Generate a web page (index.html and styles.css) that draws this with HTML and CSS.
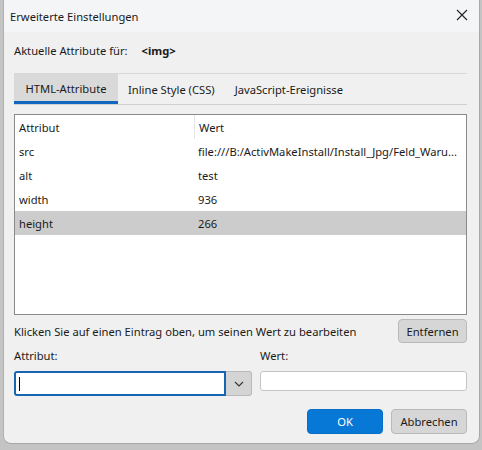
FILE: index.html
```html
<!DOCTYPE html>
<html>
<head>
<meta charset="utf-8">
<link rel="stylesheet" href="styles.css">
</head>
<body>
<div class="dialog">
  <div class="titlebar">
    <span class="title">Erweiterte Einstellungen</span>
    <svg class="close" width="12" height="12" viewBox="0 0 12 12"><path d="M1 1 L11 11 M11 1 L1 11" stroke="#222" stroke-width="1.1" fill="none"/></svg>
  </div>
  <div class="content">
    <div class="current"><span>Aktuelle Attribute für:</span><b class="tag">&lt;img&gt;</b></div>
    <div class="tabs">
      <div class="tab active">HTML-Attribute</div>
      <div class="tab">Inline Style (CSS)</div>
      <div class="tab">JavaScript-Ereignisse</div>
    </div>
    <div class="list">
      <div class="row head"><div class="c1">Attribut</div><div class="c2 sep">Wert</div></div>
      <div class="row"><div class="c1">src</div><div class="c2">file:///B:/ActivMakeInstall/Install_Jpg/Feld_Waru...</div></div>
      <div class="row"><div class="c1">alt</div><div class="c2">test</div></div>
      <div class="row"><div class="c1">width</div><div class="c2">936</div></div>
      <div class="row sel"><div class="c1">height</div><div class="c2">266</div></div>
    </div>
    <div class="hintrow">
      <span>Klicken Sie auf einen Eintrag oben, um seinen Wert zu bearbeiten</span>
      <div class="btn">Entfernen</div>
    </div>
    <div class="fields">
      <div class="field left">
        <div class="label">Attribut:</div>
        <div class="combo">
          <div class="cinput"><span class="caret"></span></div>
          <div class="cbtn"><svg width="10" height="6" viewBox="0 0 10 6"><path d="M1 1 L5 5 L9 1" stroke="#333" stroke-width="1.1" fill="none"/></svg></div>
        </div>
      </div>
      <div class="field right">
        <div class="label">Wert:</div>
        <div class="tinput"></div>
      </div>
    </div>
    <div class="actions">
      <div class="btn primary">OK</div>
      <div class="btn">Abbrechen</div>
    </div>
  </div>
</div>
</body>
</html>
```
FILE: styles.css
```css
html, body {
  margin: 0;
  padding: 0;
}
body {
  width: 482px;
  height: 450px;
  background: #c4c4c4;
  font-family: "Noto Sans", "Liberation Sans", sans-serif;
  font-size: 11.2px;
  color: #1a1a1a;
  overflow: hidden;
}
.dialog {
  margin-left: 3px;
  width: 477px;
  height: 444px;
  background: #f0f0f0;
  border-right: 1px solid #a8a8a8;
  border-bottom: 1px solid #a8a8a8;
  border-left: 1px solid #b0b0b0;
  border-radius: 0 0 8px 8px;
  box-sizing: border-box;
}
.titlebar {
  height: 32px;
  background: #f4f5f7;
  display: flex;
  align-items: center;
  justify-content: space-between;
  padding: 0 11px 0 6px;
}
.close { margin-top: -2px; }
.content {
  padding: 0 12px 0 10px;
}
.current {
  height: 18px;
  margin-top: 9px;
  display: flex;
  align-items: center;
}
.current .tag {
  margin-left: 14px;
  font-weight: bold;
}
.tabs {
  margin-top: 14px;
  display: flex;
  border-top: 1px solid #d7d7d7;
  border-bottom: 1px solid #cfcfcf;
  height: 30px;
  box-sizing: content-box;
}
.tab {
  padding: 0 10px;
  display: flex;
  align-items: center;
  height: 30px;
  box-sizing: border-box;
  white-space: nowrap;
}
.tab.active {
  background: #d9d9d9;
  border-bottom: 3px solid #0f67c0;
  padding: 2px 0 0 0;
  width: 104px;
  justify-content: center;
}
.list {
  margin-top: 9px;
  height: 201px;
  background: #fff;
  border: 1px solid #8a8a8a;
  box-sizing: border-box;
}
.row {
  display: flex;
  height: 24px;
  align-items: center;
}
.c1 {
  width: 179px;
  box-sizing: border-box;
  padding-left: 4px;
}
.c2 {
  flex: 1;
  min-width: 0;
  padding-left: 4px;
  white-space: nowrap;
  overflow: hidden;
  text-overflow: ellipsis;
}
.c2.sep {
  border-left: 1px solid #e5e5e5;
  height: 24px;
  display: flex;
  align-items: center;
}
.row.sel { background: #cccccc; }
.hintrow {
  margin-top: 4px;
  display: flex;
  justify-content: space-between;
  align-items: center;
  height: 24px;
}
.btn {
  width: 69px;
  height: 24px;
  box-sizing: border-box;
  background: #d6d6d6;
  border: 1px solid #b9b9b9;
  border-radius: 4px;
  display: flex;
  align-items: center;
  justify-content: center;
}
.btn.primary {
  background: #0878d7;
  border-color: #0a6fc7;
  color: #fff;
}
.fields {
  margin-top: 5px;
  display: flex;
  justify-content: space-between;
}
.field.left { width: 238px; }
.field.right { width: 207px; }
.label {
  height: 16px;
  line-height: 16px;
  margin-bottom: 7px;
}
.combo {
  display: flex;
  height: 25px;
}
.cinput {
  flex: 1;
  background: #fff;
  border: 2px solid #1565b0;
  border-radius: 3px 0 0 3px;
  box-sizing: border-box;
  position: relative;
}
.caret {
  position: absolute;
  left: 3px;
  top: 4px;
  width: 1px;
  height: 14px;
  background: #000;
}
.cbtn {
  width: 26px;
  background: #d4d4d4;
  border: 1px solid #b9b9b9;
  border-left: none;
  border-radius: 0 3px 3px 0;
  box-sizing: border-box;
  display: flex;
  align-items: center;
  justify-content: center;
}
.tinput {
  margin-top: 2px;
  height: 20px;
  background: #fff;
  border: 1px solid #c4c4c4;
  border-radius: 3px;
  box-sizing: border-box;
}
.actions {
  margin-top: 13px;
  display: flex;
  justify-content: flex-end;
  gap: 8px;
}
.actions .btn { height: 25px; width: 76px; }
```
